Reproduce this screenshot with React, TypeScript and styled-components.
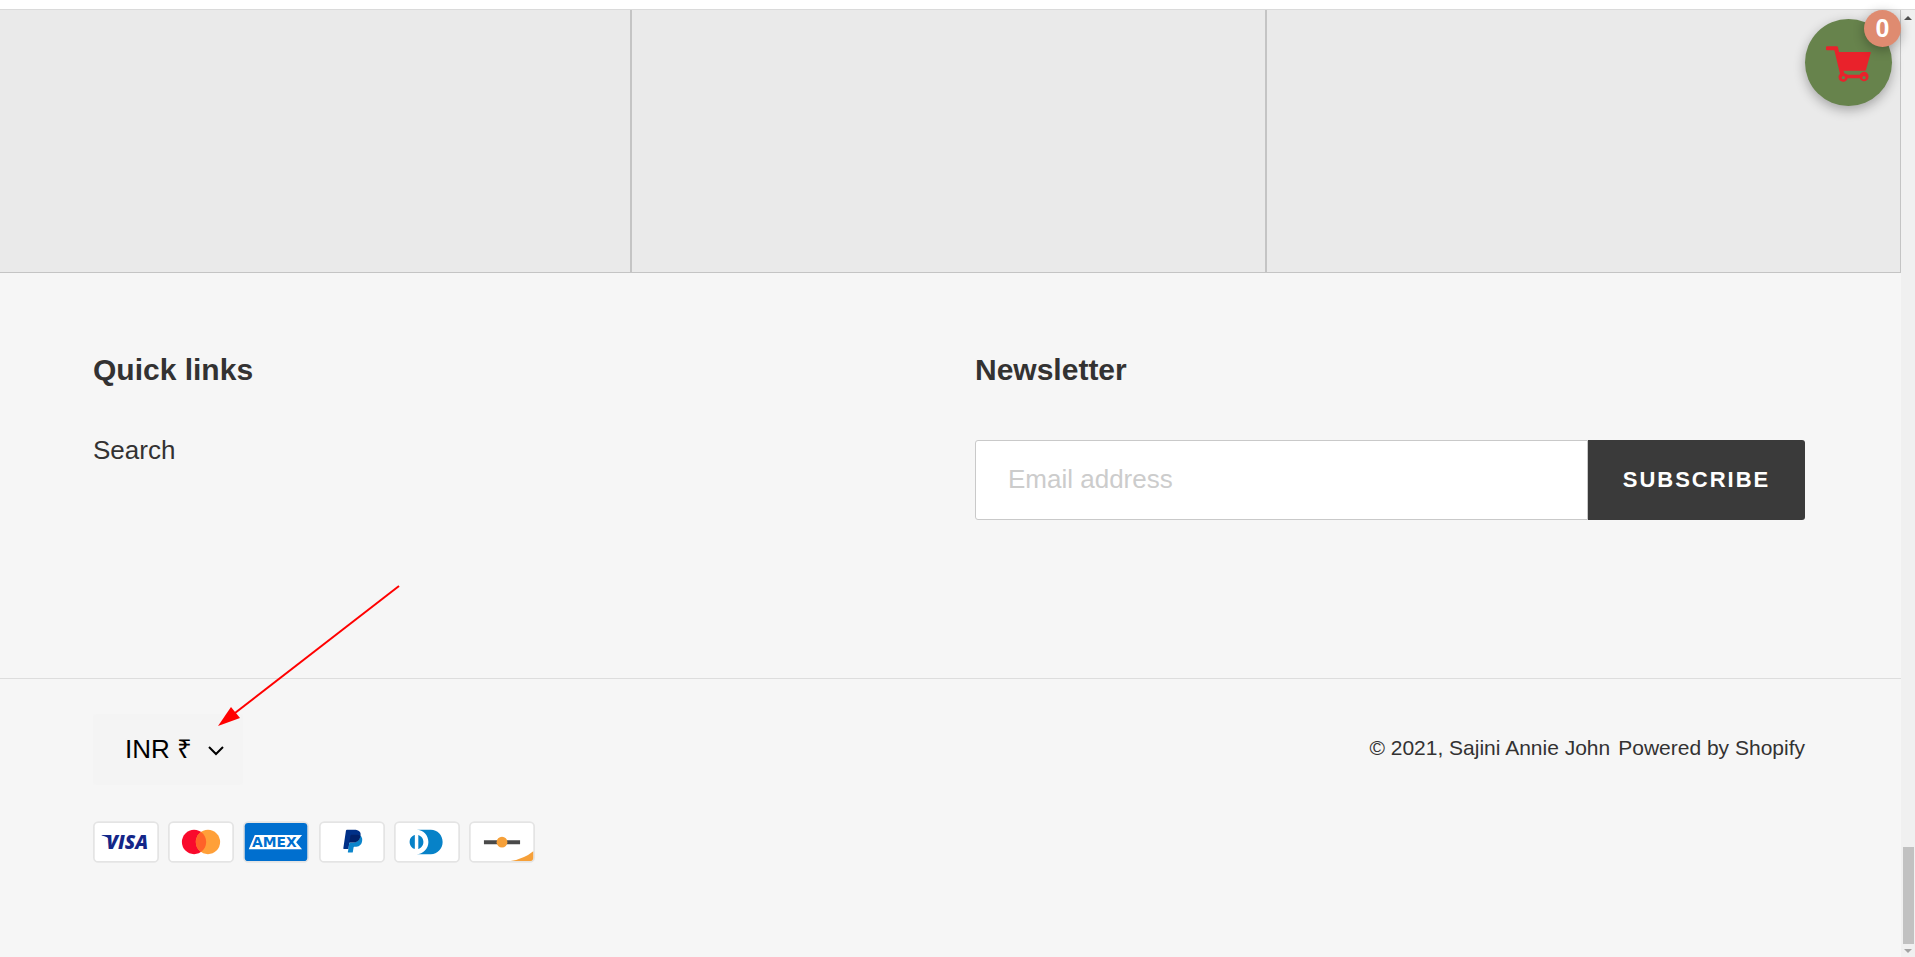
import React from "react";
import styled, { createGlobalStyle } from "styled-components";

const GlobalStyle = createGlobalStyle`
  *, *::before, *::after { box-sizing: border-box; }
  body {
    margin: 0;
    background: #f6f6f6;
    color: #333232;
    font-family: "Liberation Sans", Arial, Helvetica, sans-serif;
    font-size: 26px;
    line-height: 40px;
  }
`;

const Page = styled.div`
  position: relative;
  display: flex;
  flex-direction: column;
  min-height: 100vh;
`;

const TopStrip = styled.header`
  height: 10px;
  background: #fff;
  border-bottom: 1px solid #dadada;
`;

const Viewport = styled.div`
  flex: 1;
  display: flex;
`;

const Content = styled.div`
  position: relative;
  flex: 1;
  min-width: 0;
`;

const Gallery = styled.section`
  display: grid;
  grid-template-columns: 631fr 635fr 635fr;
  height: 263px;
  border-bottom: 1px solid #c4c4c4;
`;

const Tile = styled.div`
  background: #eaeaea;
  border: solid #c4c4c4;
  border-width: 0 1px;
  &:first-child { border-left: 0; }
`;

const FooterTop = styled.div`
  display: grid;
  grid-template-columns: 1fr 1fr;
  column-gap: 52px;
  padding: 77px 96px 158px 93px;
  border-bottom: 1px solid #dddddd;
`;

const Heading = styled.h2`
  margin: 0 0 50px;
  font-size: 30px;
  line-height: 40px;
  font-weight: 700;
`;

const LinkList = styled.ul`
  list-style: none;
  margin: 0;
  padding: 0;
  line-height: 20px;
`;

const FooterLink = styled.a`
  color: inherit;
  text-decoration: none;
`;

const SubscribeForm = styled.form`
  display: flex;
  height: 80px;
`;

const EmailInput = styled.input`
  flex: 1;
  min-width: 0;
  padding: 0 32px 2px;
  border: 1px solid #c9c9c9;
  border-radius: 3px 0 0 3px;
  background: #fff;
  color: #333232;
  font: inherit;
  outline: none;
  &::placeholder { color: #cccccc; opacity: 1; }
`;

const SubscribeButton = styled.button`
  width: 217px;
  padding: 0;
  border: 0;
  border-radius: 0 3px 3px 0;
  background: #3a3a3a;
  color: #fff;
  font: inherit;
  font-size: 22px;
  font-weight: 700;
  letter-spacing: 2px;
  text-transform: uppercase;
`;

const FooterBottom = styled.div`
  display: flex;
  justify-content: space-between;
  align-items: flex-start;
  padding: 35px 96px 95px 93px;
`;

const CurrencyBox = styled.div`
  position: relative;
  width: 150px;
  height: 71px;
  margin-bottom: 36px;
`;

const CurrencySelect = styled.select`
  appearance: none;
  width: 100%;
  height: 100%;
  padding: 0 32px 2px;
  border: 0;
  border-radius: 3px;
  background: #f4f4f4;
  color: #000;
  font: inherit;
`;

const Chevron = styled.svg`
  position: absolute;
  right: 19px;
  top: 32px;
  pointer-events: none;
`;

const Payments = styled.ul`
  display: flex;
  justify-content: space-between;
  width: 442px;
  margin: 0;
  padding: 0;
  list-style: none;
  svg { display: block; }
`;

const Copyright = styled.small`
  display: flex;
  gap: 8px;
  padding-top: 14px;
  font-size: 21px;
`;

const CartButton = styled.button`
  position: absolute;
  top: 9px;
  right: 9px;
  width: 87px;
  height: 87px;
  padding: 3px 0 0;
  border: 0;
  border-radius: 50%;
  background: #67834c;
  box-shadow: 0 4px 12px rgba(0, 0, 0, 0.3);
`;

const CartIcon = styled.svg`
  display: block;
  margin: 0 auto;
`;

const CartCount = styled.span`
  position: absolute;
  top: -9px;
  right: -9px;
  width: 37px;
  height: 37px;
  border-radius: 50%;
  background: #df8b70;
  color: #fff;
  font-size: 25px;
  font-weight: 700;
  line-height: 37px;
  text-align: center;
  box-shadow: 0 3px 12px rgba(0, 0, 0, 0.3);
`;

const Scrollbar = styled.div`
  display: flex;
  flex-direction: column;
  align-items: center;
  width: 14px;
  padding: 6px 0 4px;
  background: #f0f0f0;
`;

const Thumb = styled.div`
  width: 11px;
  height: 97px;
  margin: auto 0 5px 1px;
  background: #c1c1c1;
`;

const Pointer = styled.svg`
  position: absolute;
  left: 217px;
  top: 584px;
  pointer-events: none;
`;

type CardProps = { label: string; fill?: string; children: React.ReactNode };

function Card({ label, fill = "#fff", children }: CardProps) {
  return (
    <li>
      <svg width="66" height="42" viewBox="0 0 38 24" role="img" aria-label={label}>
        <rect width="38" height="24" rx="3" opacity=".07" />
        <rect x="1" y="1" width="36" height="22" rx="2" fill={fill} />
        {children}
      </svg>
    </li>
  );
}

function PaymentCards() {
  return (
    <Payments aria-label="Payment methods">
      <Card label="Visa">
        <path d="M5 8h4.600l.7 3.200C9 9.700 7.300 8.800 5 8.300z" fill="#142688" />
        <text x="7.600" y="16" fontFamily="Open Sans, sans-serif" fontSize="11" fontWeight="800" fontStyle="italic" fill="#142688">VISA</text>
      </Card>
      <Card label="Mastercard">
        <circle cx="15" cy="12" r="7" fill="#f90a2c" />
        <circle cx="23" cy="12" r="7" fill="#ffa039" />
        <path d="M22 12c0-2.400-1.200-4.500-3-5.700-1.800 1.300-3 3.400-3 5.700s1.200 4.500 3 5.700c1.800-1.200 3-3.300 3-5.700z" fill="#ff6229" />
      </Card>
      <Card label="American Express" fill="#006fcf">
        <path d="M6.800 8H34L30.600 12.200 34 16.200H3.300z" fill="#fff" />
        <text x="5.200" y="15.100" fontFamily="DejaVu Sans, sans-serif" fontSize="8" fontWeight="700" fill="#006fcf">AMEX</text>
      </Card>
      <Card label="PayPal">
        <path fill="#003087" d="M23.900 8.300c.2-1 0-1.700-.6-2.300-.6-.7-1.700-1-3.100-1h-4.100c-.3 0-.5.2-.6.5L14 15.600c0 .2.1.4.3.4H17l.4-3.400 1.800-2.200 4.700-2.100z" />
        <path fill="#0c85cb" d="M23.900 8.300l-.2.2c-.5 2.800-2.200 3.800-4.600 3.800H18c-.3 0-.5.2-.6.5l-.6 3.900-.2 1c0 .2.1.4.3.4H19c.3 0 .5-.2.5-.4v-.1l.4-2.400v-.1c0-.2.3-.4.5-.4h.3c2.100 0 3.700-.8 4.100-3.200.2-1 .1-1.800-.4-2.400-.1-.5-.3-.7-.5-.8z" />
        <path fill="#012169" d="M23.300 8.100c-.1-.1-.2-.1-.3-.1-.1 0-.2 0-.3-.1-.3-.1-.7-.1-1.100-.1h-3c-.1 0-.2 0-.2.1-.2.1-.3.2-.3.4l-.7 4.400v.1c0-.3.3-.5.6-.5h1.300c2.500 0 4.100-1 4.600-3.800v-.2c-.1-.1-.3-.2-.5-.2h-.1z" />
      </Card>
      <Card label="Diners Club">
        <path fill="#0782c8" d="M12 12v3.700c0 .3-.2.3-.5.2-1.900-.8-3-3.300-2.300-5.400.4-1.100 1.200-2 2.300-2.400.4-.2.5-.1.5.2V12zm2 0V8.300c0-.3 0-.3.3-.2 2.100.8 3.200 3.300 2.400 5.400-.4 1.100-1.200 2-2.300 2.400-.4.2-.4.1-.4-.2V12zm7.200-7H13c3.800 0 6.800 3.100 6.800 7s-3 7-6.800 7h8.200c3.800 0 6.800-3.100 6.800-7s-3-7-6.800-7z" />
      </Card>
      <Card label="Discover">
        <path d="M8.600 11H29.400v2.300H8.600z" fill="#494949" />
        <circle cx="19" cy="12.100" r="3.100" fill="#f6a039" />
        <path d="M24 23Q32 21.500 37 17.300V21a2 2 0 0 1-2 2z" fill="#f6a039" />
      </Card>
    </Payments>
  );
}

function Footer() {
  return (
    <footer>
      <FooterTop>
        <section>
          <Heading>Quick links</Heading>
          <LinkList>
            <li><FooterLink href="#search">Search</FooterLink></li>
          </LinkList>
        </section>
        <section>
          <Heading>Newsletter</Heading>
          <SubscribeForm onSubmit={(e) => e.preventDefault()}>
            <EmailInput type="email" aria-label="Email address" placeholder="Email address" />
            <SubscribeButton type="submit">Subscribe</SubscribeButton>
          </SubscribeForm>
        </section>
      </FooterTop>
      <FooterBottom>
        <div>
          <CurrencyBox>
            <CurrencySelect aria-label="Currency" defaultValue="INR">
              <option value="INR">INR ₹</option>
            </CurrencySelect>
            <Chevron width="16" height="10" viewBox="0 0 16 10" aria-hidden="true">
              <path d="M1 1 8 8 15 1" fill="none" stroke="#000" strokeWidth="2" />
            </Chevron>
          </CurrencyBox>
          <PaymentCards />
        </div>
        <Copyright>
          <span>© 2021, <FooterLink href="#home">Sajini Annie John</FooterLink></span>
          <FooterLink href="#shopify">Powered by Shopify</FooterLink>
        </Copyright>
      </FooterBottom>
    </footer>
  );
}

function FloatingCart() {
  return (
    <CartButton type="button" aria-label="Cart">
      <CartIcon width="45" height="37" viewBox="0 0 135 111" aria-hidden="true">
        <path
          fill="#e9222b"
          d="M3 1H32Q35 1 36 4L39 18H132Q135 18 134 21L120 71Q119 74 116 74H52L55 82Q62 85 65 86H101A14 14 0 1 1 101 97H65A14 14 0 1 1 42 83L25 13H3Q0 13 0 10V4Q0 1 3 1Z"
        />
        <circle cx="52" cy="95" r="5" fill="#67834c" />
        <circle cx="114" cy="95" r="5" fill="#67834c" />
      </CartIcon>
      <CartCount>0</CartCount>
    </CartButton>
  );
}

export default function App() {
  return (
    <>
      <GlobalStyle />
      <Page>
        <TopStrip />
        <Viewport>
          <Content>
            <Gallery>
              <Tile />
              <Tile />
              <Tile />
            </Gallery>
            <Footer />
            <FloatingCart />
          </Content>
          <Scrollbar aria-hidden="true">
            <svg width="8" height="5" viewBox="0 0 8 5"><path d="M4 0 8 4H0z" fill="#505050" /></svg>
            <Thumb />
            <svg width="8" height="5" viewBox="0 0 8 5"><path d="M0 0H8L4 4z" fill="#a3a3a3" /></svg>
          </Scrollbar>
        </Viewport>
        <Pointer width="186" height="146" viewBox="0 0 186 146" aria-hidden="true">
          <path d="M182 2 18 129" stroke="#ff0000" strokeWidth="2" />
          <path d="M1 142 14 123 23 134z" fill="#ff0000" />
        </Pointer>
      </Page>
    </>
  );
}
